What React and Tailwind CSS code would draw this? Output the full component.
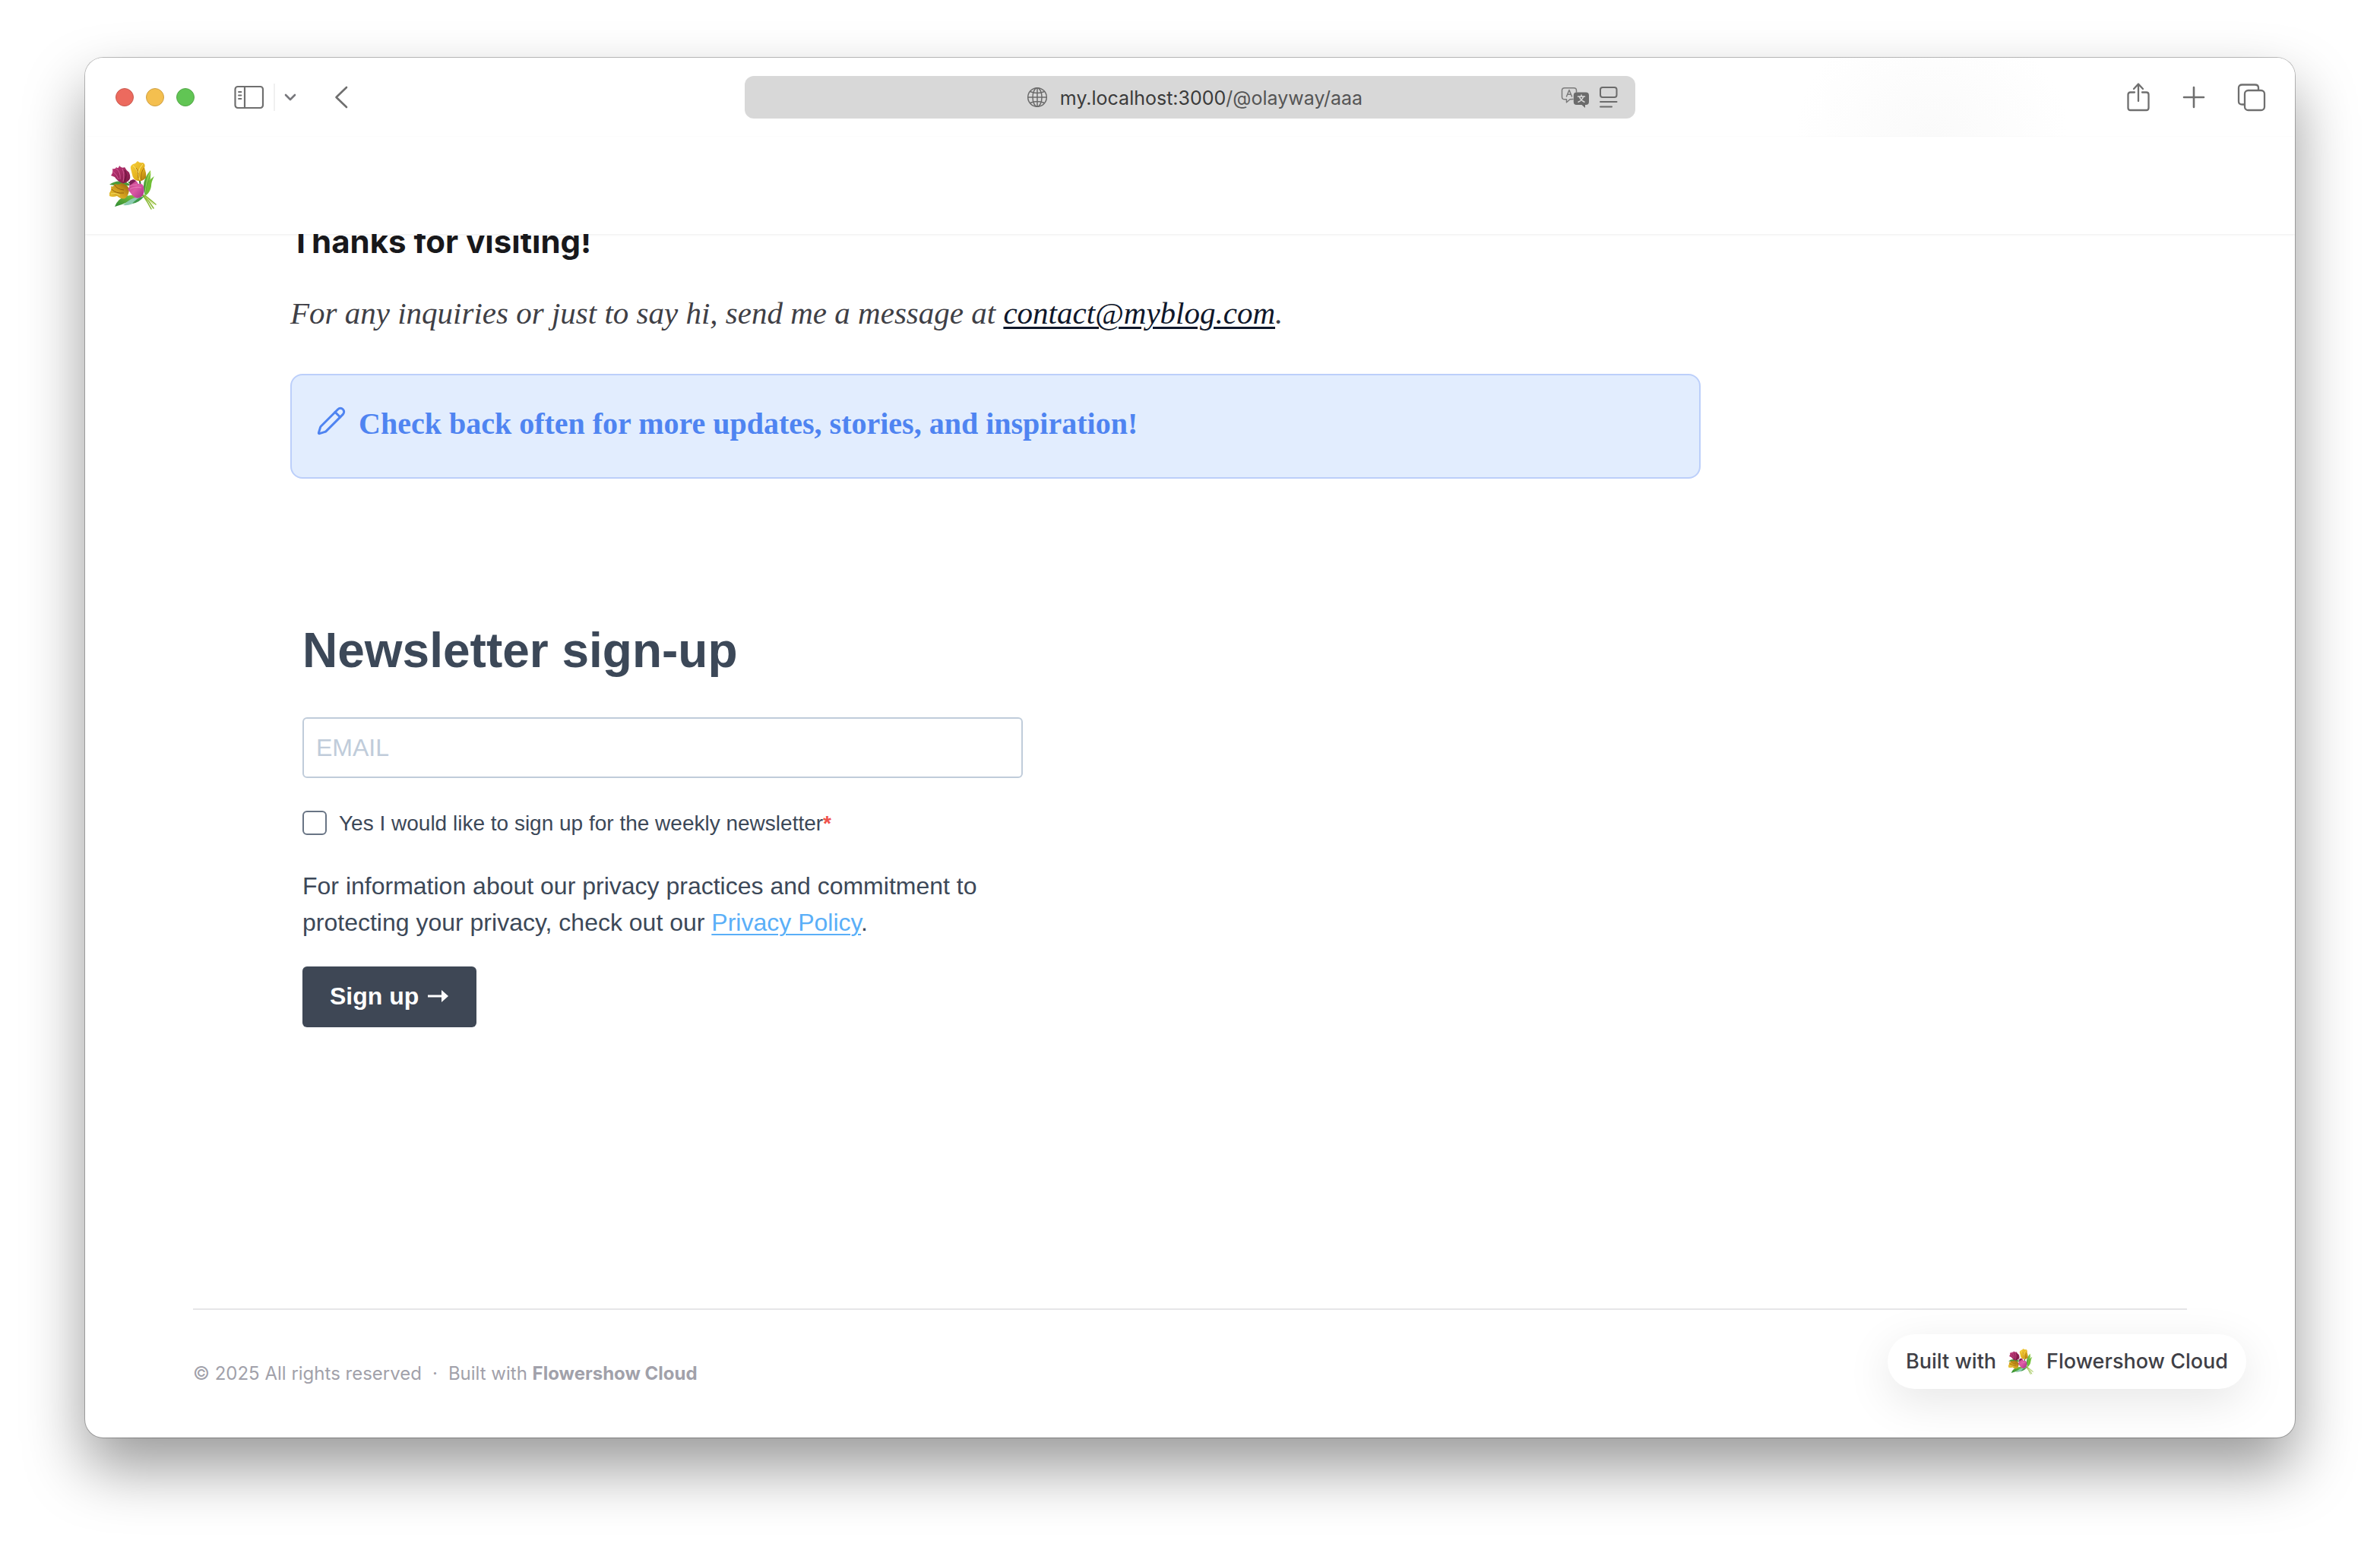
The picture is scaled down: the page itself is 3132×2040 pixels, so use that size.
import { useId } from "react";

function Bouquet({ className }) {
  const id = useId();
  const crimson = id + "c";
  const gold = id + "g";
  const amber = id + "a";
  const pink = id + "p";
  const leaf = id + "l";
  return (
    <svg viewBox="0 0 64 64" className={className} role="img" aria-label="Flowershow">
      <defs>
        <linearGradient id={crimson} x1="0" y1="0" x2="1" y2="1">
          <stop offset="0" stopColor="#c23a7c" />
          <stop offset="1" stopColor="#7d1743" />
        </linearGradient>
        <linearGradient id={gold} x1="0" y1="0" x2="1" y2="1">
          <stop offset="0" stopColor="#f7d03c" />
          <stop offset="0.6" stopColor="#e3b11d" />
          <stop offset="1" stopColor="#a8700c" />
        </linearGradient>
        <linearGradient id={amber} x1="1" y1="0" x2="0" y2="1">
          <stop offset="0" stopColor="#8f5f10" />
          <stop offset="0.5" stopColor="#cf9c1c" />
          <stop offset="1" stopColor="#ecc838" />
        </linearGradient>
        <linearGradient id={pink} x1="0" y1="0" x2="1" y2="1">
          <stop offset="0" stopColor="#b8347c" />
          <stop offset="0.5" stopColor="#dd5aa6" />
          <stop offset="1" stopColor="#a32f86" />
        </linearGradient>
        <linearGradient id={leaf} x1="1" y1="0" x2="0" y2="1">
          <stop offset="0" stopColor="#8fce3c" />
          <stop offset="1" stopColor="#2c8a34" />
        </linearGradient>
      </defs>
      <g fill="none" strokeLinecap="round">
        <path d="M26 28 L46 47 M40 26 L42 42" stroke="#2f6b28" strokeWidth="2" />
        <path d="M44 45 Q50 53 55 63 M45 45 Q52 52 58 62 M46 45 Q54 51 61 57" stroke="#8dbb3a" strokeWidth="1.6" />
        <path d="M47 47 Q52 51 58 57" stroke="#c9dd6a" strokeWidth="1" />
      </g>
      <path d="M54 12 Q45 22 45 33 Q45 40 47 45 Q51 35 53 28 Q55 20 54 12Z" fill={`url(#${leaf})`} />
      <path d="M59 20 Q51 25 49 34 Q48 40 47 46 Q54 41 55 33 Q55 27 59 20Z" fill="#6fbe35" />
      <path d="M54 14 Q48 26 47 42" stroke="#b5e26a" strokeWidth="0.8" fill="none" />
      <path d="M0 31 Q8 25 18 27 Q25 28 28 32 Q14 34 0 31Z" fill="#4a9a38" />
      <path d="M45 46 Q33 43 22 46 Q11 49 7 60 Q18 57 26 53 Q36 47 45 46Z" fill={`url(#${leaf})`} />
      <path d="M43 47 Q31 47 24 53 Q19 57 18 58 Q29 59 35 53Z" fill="#8ccbb0" />
      <path d="M43 47 Q36 49 30 56 Q39 55 46 46Z" fill="#3f9a4a" />
      <path d="M2 19 Q5 16 4 10 Q8 11 9 8 Q12 11 13 6 Q16 10 20 8 Q22 12 26 15 Q29 23 25 26 Q21 30 17 29 Q10 26 7 21Z" fill={`url(#${crimson})`} />
      <path d="M9 10 Q15 14 14 24 M17 10 Q20 17 18 27 M5 14 Q10 18 12 24" stroke="#e26ba6" strokeWidth="0.7" fill="none" />
      <path d="M20 12 Q24 17 20 27" stroke="#5d0f34" strokeWidth="1" fill="none" />
      <path d="M28 10 Q27 6 31 4 Q35 3 37 0 Q40 3 44 2 Q48 4 46 9 Q49 16 48 22 Q44 27 38 26 Q31 25 30 18Z" fill={`url(#${gold})`} />
      <path d="M31 6 Q37 10 40 25 M44 4 Q39 9 38 16" stroke="#fbe878" strokeWidth="1" fill="none" />
      <path d="M46 9 Q41 13 42 25 M35 9 Q38 12 38 22" stroke="#9c6510" strokeWidth="0.8" fill="none" />
      <path d="M0 42 Q3 39 2 33 Q5 35 7 30 Q12 32 16 29 Q23 31 26 36 Q26 45 21 49 Q16 51 10 46 Q4 48 0 46Z" fill={`url(#${amber})`} />
      <path d="M7 31 Q9 37 19 38 M3 37 Q8 43 19 42" stroke="#8b5b0d" strokeWidth="0.9" fill="none" />
      <path d="M2 43 Q9 41 14 45" stroke="#f6e068" strokeWidth="0.9" fill="none" />
      <path d="M26 31 Q28 24 32 24 Q36 26 38 30 Q44 29 45 34 Q47 43 42 47 Q36 51 31 46 Q27 41 24 37 Q27 35 26 31Z" fill={`url(#${pink})`} />
      <path d="M27 26 Q31 23 35 26 Q31 29 27 32Z" fill="#7d1f55" />
      <path d="M27 37 Q33 33 42 35 M26 33 Q30 31 36 31" stroke="#f19acb" strokeWidth="0.6" fill="none" />
    </svg>
  );
}

function SidebarIcon() {
  return (
    <svg viewBox="0 0 40 32" className="h-8 w-10" fill="none" stroke="#6f6f6f" strokeWidth="2.2" strokeLinecap="round">
      <rect x="1.5" y="2" width="36.5" height="28" rx="3.5" />
      <path d="M14 2V30" />
      <path d="M6 9H9.500M6 13.500H9.500M6 18H9.500" strokeWidth="1.8" />
    </svg>
  );
}

function GlobeIcon() {
  return (
    <svg viewBox="0 0 28 28" className="size-7" fill="none" stroke="#6b6b6b" strokeWidth="1.5">
      <circle cx="14" cy="14" r="12.300" />
      <ellipse cx="14" cy="14" rx="6" ry="12.300" />
      <path d="M14 1.700V26.300M1.700 14H26.300M4.500 6.500Q14 10.500 23.500 6.500M4.500 21.500Q14 17.500 23.500 21.500" />
    </svg>
  );
}

function TranslateIcon() {
  return (
    <svg viewBox="0 0 38 28" className="h-7 w-[38px]" fill="none" strokeLinecap="round" strokeLinejoin="round">
      <path
        d="M16 16.500L12 16.800L7.500 20.800V16.800H5Q1.500 16.800 1.500 13.500V5Q1.500 1.800 5 1.800H17Q20.500 1.800 20.500 5V7"
        stroke="#7b7b7b"
        strokeWidth="1.500"
      />
      <path d="M7.500 13L11 4.500L14.500 13M8.600 10.300H13.400" stroke="#7b7b7b" strokeWidth="1.500" />
      <path
        d="M20.500 7.500H33Q37 7.500 37 11.500V20Q37 24 33 24H32V28L27.500 24H20.500Q16.800 24 16.800 20V11.500Q16.800 7.500 20.500 7.500Z"
        fill="#6b6b6b"
      />
      <path d="M22.500 13H31.500M27 11V13M24.300 13Q26 18 31 20.300M29.800 13Q28 18 23 20.300" stroke="#dadada" strokeWidth="1.500" />
    </svg>
  );
}

function ReaderIcon() {
  return (
    <svg viewBox="0 0 26 30" className="h-[30px] w-[26px]" fill="none" stroke="#6b6b6b" strokeWidth="2" strokeLinecap="round">
      <rect x="2" y="2" width="21.500" height="13" rx="3" />
      <path d="M2 21H23.500M2 27.500H17" />
    </svg>
  );
}

function ShareIcon() {
  return (
    <svg viewBox="0 0 32 40" className="h-10 w-8" fill="none" stroke="#6f6f6f" strokeWidth="2.300" strokeLinecap="round" strokeLinejoin="round">
      <path d="M11 13.500H5.500Q2.500 13.500 2.500 16.500V34Q2.500 37 5.500 37H26.500Q29.500 37 29.500 34V16.500Q29.500 13.500 26.500 13.500H21" />
      <path d="M16 25V3M10 9L16 2.500L22 9" />
    </svg>
  );
}

function PlusIcon() {
  return (
    <svg viewBox="0 0 30 30" className="size-[30px]" fill="none" stroke="#6f6f6f" strokeWidth="2.600" strokeLinecap="round">
      <path d="M15 2V28M2 15H28" />
    </svg>
  );
}

function TabsIcon() {
  return (
    <svg viewBox="0 0 38 38" className="size-[38px]" fill="none" stroke="#6f6f6f" strokeWidth="2.300" strokeLinejoin="round">
      <path d="M9 28.500H6.500Q2 28.500 2 24.500V6.500Q2 2.500 6.500 2.500H23.500Q28 2.500 28 6.500V9" />
      <rect x="10" y="10" width="26" height="26" rx="4.500" />
    </svg>
  );
}

function Toolbar() {
  return (
    <div className="grid h-26 grid-cols-[1fr_1172px_1fr] items-center bg-[radial-gradient(180px_160px_at_2430px_104px,#fafafa,#ffffff)]">
      <div className="flex items-center pl-10">
        <div className="flex gap-4">
          <button type="button" aria-label="Close" className="size-6 rounded-full border border-[#c9594f] bg-[#ec6a5e]" />
          <button type="button" aria-label="Minimize" className="size-6 rounded-full border border-[#cfa044] bg-[#f4bf4f]" />
          <button type="button" aria-label="Zoom" className="size-6 rounded-full border border-[#55a64a] bg-[#61c554]" />
        </div>
        <button type="button" aria-label="Sidebar" className="ml-13">
          <SidebarIcon />
        </button>
        <span className="ml-3 h-9 w-0.5 bg-[#f0f0f0]" />
        <button type="button" aria-label="Tab groups" className="ml-3">
          <svg viewBox="0 0 16 10" className="h-2.5 w-4" fill="none" stroke="#77777c" strokeWidth="2.600" strokeLinecap="round" strokeLinejoin="round">
            <path d="M2 2L8 8L14 2" />
          </svg>
        </button>
        <button type="button" aria-label="Back" className="ml-[50px]">
          <svg viewBox="0 0 18 30" className="h-[30px] w-[18px]" fill="none" stroke="#6f6f6f" strokeWidth="2.600" strokeLinecap="round" strokeLinejoin="round">
            <path d="M16 2L2.500 15L16 28" />
          </svg>
        </button>
      </div>
      <div className="grid h-14 grid-cols-[1fr_auto_1fr] items-center rounded-xl bg-[#d8d8d8] px-[22px]">
        <span />
        <div className="flex items-center gap-4 pl-3">
          <GlobeIcon />
          <span className="pt-0.5 text-[25px] leading-8 text-[#3b3b3b]">
            my.localhost:3000<span className="text-[#555555]">/@olayway/aaa</span>
          </span>
        </div>
        <div className="flex items-center justify-end gap-3">
          <button type="button" aria-label="Translate">
            <TranslateIcon />
          </button>
          <button type="button" aria-label="Reader">
            <ReaderIcon />
          </button>
        </div>
      </div>
      <div className="flex items-center justify-end gap-[42px] pr-[38px]">
        <button type="button" aria-label="Share">
          <ShareIcon />
        </button>
        <button type="button" aria-label="New tab">
          <PlusIcon />
        </button>
        <button type="button" aria-label="Tab overview">
          <TabsIcon />
        </button>
      </div>
    </div>
  );
}

function Article() {
  return (
    <article className="-mt-3.5 max-w-[1856px]">
      <h2 className="text-[42px] leading-12 font-bold text-[#18181b]">Thanks for visiting!</h2>
      <p className="mt-[38px] font-['Liberation_Serif',serif] text-[41px] leading-16 text-[#3f3f46] italic">
        For any inquiries or just to say hi, send me a message at{" "}
        <a href="mailto:contact@myblog.com" className="font-medium text-[#0f172a] underline decoration-3 underline-offset-4">
          contact@myblog.com
        </a>
        .
      </p>
      <div className="mt-12 flex h-[138px] items-start gap-4 rounded-2xl border-2 border-[#bccffa] bg-[#e2edfe] px-8 pt-8">
        <svg viewBox="0 0 24 24" className="mt-2 size-10" fill="none" stroke="#4f84f1" strokeWidth="1.800" strokeLinecap="round" strokeLinejoin="round">
          <path d="M21.174 6.812a1 1 0 0 0-3.986-3.987L3.842 16.174a2 2 0 0 0-.5.830l-1.321 4.352a.5.500 0 0 0 .623.622l4.353-1.320a2 2 0 0 0 .830-.497z" />
          <path d="m15 5 4 4" />
        </svg>
        <p className="font-['Liberation_Serif',serif] text-[40px] leading-16 font-bold text-[#4f84f1]">
          Check back often for more updates, stories, and inspiration!
        </p>
      </div>
    </article>
  );
}

function Newsletter() {
  return (
    <form className="mt-[178px] ml-4 max-w-[948px] font-['Liberation_Sans',sans-serif] text-[#3c4858]">
      <h1 className="text-[64px] leading-24 font-bold">Newsletter sign-up</h1>
      <input
        type="email"
        aria-label="Email"
        placeholder="EMAIL"
        className="mt-10 block h-20 w-full rounded-md border-2 border-[#c0ccda] px-4 text-[32px] placeholder:text-[#c0ccda]"
      />
      <label className="mt-[38px] flex items-center gap-4 text-[28px] leading-10">
        <input type="checkbox" className="size-8 appearance-none rounded-md border-2 border-[#687484] bg-white" />
        <span className="pt-0.5">
          Yes I would like to sign up for the weekly newsletter<span className="font-bold text-[#f0524b]">*</span>
        </span>
      </label>
      <p className="mt-[38px] text-[32px] leading-12">
        For information about our privacy practices and commitment to protecting your privacy, check out our{" "}
        <a href="#privacy" className="text-[#5aaff8] underline decoration-2 underline-offset-4">
          Privacy Policy
        </a>
        .
      </p>
      <button type="submit" className="mt-[34px] flex h-20 items-center gap-3 rounded-md bg-[#3e4755] px-9 pb-0.5 text-[32px] font-bold text-white">
        Sign up
        <svg viewBox="0 0 28 20" className="h-5 w-7" fill="#ffffff" aria-hidden="true">
          <path d="M0 8.500H18V2L27 10L18 18V11.500H0Z" />
        </svg>
      </button>
    </form>
  );
}

export default function App() {
  return (
    <div className="flex min-h-screen flex-col bg-white px-28 pt-[76px] pb-[148px] font-['Inter',sans-serif]">
      <div className="relative flex flex-1 flex-col overflow-hidden rounded-[24px] bg-white shadow-[0_0_0_1px_rgba(0,0,0,0.25),0_40px_80px_rgba(0,0,0,0.4)]">
        <Toolbar />
        <header className="relative z-10 flex h-32 items-center bg-white px-8 shadow-[0_1px_3px_rgba(0,0,0,0.07)]">
          <a href="#home">
            <Bouquet className="size-16" />
          </a>
        </header>
        <main className="px-[270px]">
          <Article />
          <Newsletter />
        </main>
        <footer className="mx-[142px] mt-auto h-[170px] border-t-2 border-[#e6e6e8] pt-16 text-[24px] leading-10 text-[#a1a1aa]">
          <p className="flex gap-3.5">
            <span>© 2025 All rights reserved</span>
            <span>·</span>
            <span>
              Built with{" "}
              <a href="#flowershow" className="font-bold">
                Flowershow Cloud
              </a>
            </span>
          </p>
        </footer>
        <a
          href="#flowershow-cloud"
          className="absolute right-16 bottom-16 flex h-18 items-center gap-4 rounded-full bg-white px-6 text-[27px] font-medium text-[#3f3f46] shadow-[0_16px_60px_rgba(0,0,0,0.1)]"
        >
          Built with
          <Bouquet className="size-[34px]" />
          Flowershow Cloud
        </a>
      </div>
    </div>
  );
}
